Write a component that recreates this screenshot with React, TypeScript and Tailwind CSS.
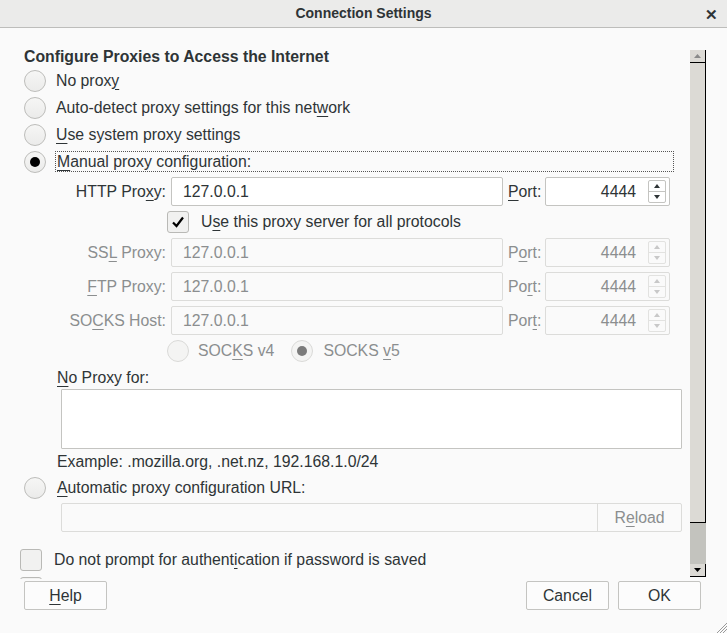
import React from "react"

const font = { fontFamily: '"Liberation Sans", Arial, sans-serif' }

function U({ children }: { children: React.ReactNode }) {
  return <span className="underline decoration-1 underline-offset-[3px]">{children}</span>
}

function Radio({ checked = false, disabled = false }: { checked?: boolean; disabled?: boolean }) {
  return (
    <div
      className={`w-[22px] h-[22px] rounded-full border flex items-center justify-center flex-shrink-0 ${
        disabled ? "border-[#dadad8] bg-[#f4f4f3]" : "border-[#bdbdba] bg-gradient-to-b from-[#f6f6f5] to-[#ebebea]"
      }`}
    >
      {checked && (
        <div className={`w-[10px] h-[10px] rounded-full ${disabled ? "bg-[#7b7b7b]" : "bg-black"}`} />
      )}
    </div>
  )
}

function Checkbox({ checked = false }: { checked?: boolean }) {
  return (
    <div className="w-[22px] h-[22px] rounded-[3px] border border-[#b9b9b6] bg-[#f1f1f0] flex items-center justify-center flex-shrink-0">
      {checked && (
        <svg width="14" height="14" viewBox="0 0 14 14">
          <path d="M2 7.5 L5.5 11 L12 2.5" fill="none" stroke="#000" strokeWidth="2.2" />
        </svg>
      )}
    </div>
  )
}

function Spinner({ disabled = false }: { disabled?: boolean }) {
  const c = disabled ? "#c8c8c8" : "#2e3436"
  const b = disabled ? "border-[#e2e2e0]" : "border-[#c4c4c1]"
  return (
    <div className={`absolute right-[3px] top-[2px] bottom-[2px] w-[18px] flex flex-col border ${b} rounded-[2px]`}>
      <div className={`flex-1 flex items-center justify-center border-b ${b}`}>
        <svg width="6" height="4" viewBox="0 0 6 4"><path d="M0 4 L3 0 L6 4 Z" fill={c} /></svg>
      </div>
      <div className="flex-1 flex items-center justify-center">
        <svg width="6" height="4" viewBox="0 0 6 4"><path d="M0 0 L3 4 L6 0 Z" fill={c} /></svg>
      </div>
    </div>
  )
}

function ProxyRow({
  label,
  port,
  disabled = false,
}: {
  label: React.ReactNode
  port: React.ReactNode
  disabled?: boolean
}) {
  const labelColor = disabled ? "text-[#8b8e8f]" : "text-[#2e3436]"
  const inputCls = disabled
    ? "border-[#dcdcda] bg-[#fafafa] text-[#8b8e8f]"
    : "border-[#c4c4c1] bg-white text-[#2e3436]"
  return (
    <div className="flex items-center h-[29px]">
      <div className={`w-[171px] pr-[5px] text-right ${labelColor}`}>{label}</div>
      <div className={`w-[332px] h-[29px] border rounded-[2px] px-[11px] flex items-center ${inputCls}`}>127.0.0.1</div>
      <div className={`w-[42px] pl-[5px] ${labelColor}`}>{port}</div>
      <div className={`relative w-[125px] h-[29px] border rounded-[2px] flex items-center justify-end pr-[33px] ${inputCls}`}>
        4444
        <Spinner disabled={disabled} />
      </div>
    </div>
  )
}

function ScrollBar() {
  return (
    <div className="w-[16px] pt-[22px] pb-[2px] flex flex-col">
      <div className="h-[13px] bg-[#dcdad5] border-r border-b border-black flex items-center justify-center">
        <svg width="7" height="4" viewBox="0 0 7 4"><path d="M0 4 L3.5 0 L7 4 Z" fill="#8a8a8a" /></svg>
      </div>
      <div className="flex-1 bg-[#dcdad5] border-r border-b border-black" />
      <div className="h-[41px] bg-[#c3c3be]" />
      <div className="h-[13px] bg-[#dcdad5] border-r border-b border-black flex items-center justify-center">
        <svg width="7" height="4" viewBox="0 0 7 4"><path d="M0 0 L3.5 4 L7 0 Z" fill="#000" /></svg>
      </div>
    </div>
  )
}

function Button({ children, className = "" }: { children: React.ReactNode; className?: string }) {
  return (
    <div
      className={`w-[83px] h-[29px] border border-[#c4c4c1] rounded-[2px] bg-[#fcfcfc] flex items-center justify-center text-[#2e3436] ${className}`}
    >
      {children}
    </div>
  )
}

export default function App() {
  return (
    <div className="relative w-[727px] h-[633px] bg-[#fafafa] flex flex-col overflow-hidden text-[15.8px] text-[#2e3436]" style={font}>
      {/* Title bar */}
      <div className="h-[28px] flex-shrink-0 bg-[#ebebea] border-b border-[#bdbdbb] relative flex items-center justify-center">
        <span className="text-[14px] font-bold text-[#2e3436]">Connection Settings</span>
        <span className="absolute right-[9px] top-[4px] text-[15px] font-bold text-[#2e3436]">✕</span>
      </div>

      {/* Scroll area */}
      <div className="h-[551px] flex-shrink-0 flex overflow-hidden">
        <div className="w-[690px] pt-[19px] leading-[20px]">
          <div className="h-[20px] ml-[24px] font-bold">Configure Proxies to Access the Internet</div>

          <div className="h-[27px] ml-[24px] flex items-center gap-[10px]">
            <Radio />
            <span>No prox<U>y</U></span>
          </div>
          <div className="h-[27px] ml-[24px] flex items-center gap-[10px]">
            <Radio />
            <span>Auto-detect proxy settings for this net<U>w</U>ork</span>
          </div>
          <div className="h-[27px] ml-[24px] flex items-center gap-[10px]">
            <Radio />
            <span><U>U</U>se system proxy settings</span>
          </div>
          <div className="h-[27px] ml-[24px] flex items-center gap-[9px]">
            <Radio checked />
            <span className="w-[619px] h-[21px] border border-dotted border-[#555] flex items-center pl-[1px]">
              <span><U>M</U>anual proxy configuration:</span>
            </span>
          </div>

          <div className="mt-[2px]">
            <ProxyRow label={<>HTTP Pro<U>x</U>y:</>} port={<><U>P</U>ort:</>} />
          </div>

          <div className="h-[32px] ml-[167px] flex items-center gap-[12px]">
            <Checkbox checked />
            <span>U<U>s</U>e this proxy server for all protocols</span>
          </div>

          <ProxyRow disabled label={<>SS<U>L</U> Proxy:</>} port={<>P<U>o</U>rt:</>} />
          <div className="mt-[5px]">
            <ProxyRow disabled label={<><U>F</U>TP Proxy:</>} port={<>Po<U>r</U>t:</>} />
          </div>
          <div className="mt-[5px]">
            <ProxyRow disabled label={<>SO<U>C</U>KS Host:</>} port={<>Por<U>t</U>:</>} />
          </div>

          <div className="h-[32px] ml-[167px] flex items-center text-[#8b8e8f]">
            <Radio disabled />
            <span className="ml-[9px]">SOC<U>K</U>S v4</span>
            <div className="ml-[17px]">
              <Radio disabled checked />
            </div>
            <span className="ml-[10px]">SOCKS <U>v</U>5</span>
          </div>

          <div className="h-[21px] ml-[57px] flex items-center">
            <span><U>N</U>o Proxy for:</span>
          </div>
          <div className="mt-[1px] ml-[61px] w-[621px] h-[60px] border border-[#c4c4c1] bg-white rounded-[1px]" />

          <div className="h-[26px] ml-[57px] flex items-center">Example: .mozilla.org, .net.nz, 192.168.1.0/24</div>

          <div className="h-[26px] ml-[24px] flex items-center gap-[11px]">
            <Radio />
            <span><U>A</U>utomatic proxy configuration URL:</span>
          </div>

          <div className="mt-[2px] ml-[61px] w-[621px] h-[29px] flex border border-[#dcdcda] rounded-[2px] bg-[#fafafa]">
            <div className="flex-1" />
            <div className="w-[84px] border-l border-[#dcdcda] flex items-center justify-center text-[#8b8e8f]">
              <span>R<U>e</U>load</span>
            </div>
          </div>

          <div className="mt-[17px] ml-[20px] h-[22px] flex items-center gap-[12px]">
            <Checkbox />
            <span>Do not prompt for authent<U>i</U>cation if password is saved</span>
          </div>
          <div className="mt-[6px] ml-[20px]">
            <Checkbox />
          </div>
        </div>
        <ScrollBar />
      </div>

      {/* Buttons */}
      <div className="mt-[2px] flex items-start">
        <Button className="ml-[24px]">
          <span><U>H</U>elp</span>
        </Button>
        <div className="flex-1" />
        <Button>Cancel</Button>
        <Button className="ml-[9px] mr-[26px]">OK</Button>
      </div>

      {/* Resize grip */}
      <svg className="absolute right-0 bottom-0" width="12" height="12" viewBox="0 0 12 12">
        <path d="M12 2 L2 12 M12 5 L5 12 M12 8 L8 12" stroke="#9a9a9a" strokeWidth="1" />
      </svg>
    </div>
  )
}
